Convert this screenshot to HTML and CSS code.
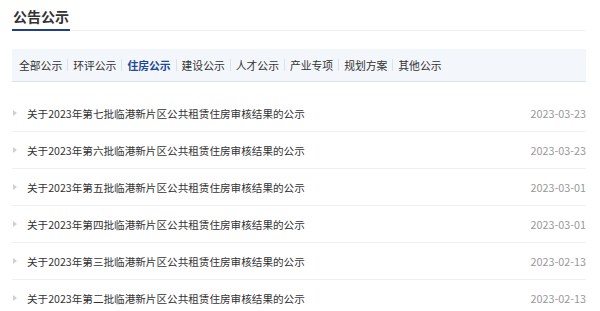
FILE: index.html
```html
<!DOCTYPE html>
<html lang="zh-CN">
<head>
    <meta charset="UTF-8">
    <meta name="viewport" content="width=device-width, initial-scale=1.0">
    <title>公告公示</title>
    <link rel="stylesheet" href="styles.css">
</head>
<body>
    <div class="notice">
        <div class="notice-head">
            <span class="notice-title">公告公示</span>
        </div>
        <ul class="tabs">
            <li class="tab">全部公示</li>
            <li class="tab">环评公示</li>
            <li class="tab active">住房公示</li>
            <li class="tab">建设公示</li>
            <li class="tab">人才公示</li>
            <li class="tab">产业专项</li>
            <li class="tab">规划方案</li>
            <li class="tab">其他公示</li>
        </ul>
        <ul class="list">
            <li class="item"><span class="item-title">关于2023年第七批临港新片区公共租赁住房审核结果的公示</span><span class="item-date">2023-03-23</span></li>
            <li class="item"><span class="item-title">关于2023年第六批临港新片区公共租赁住房审核结果的公示</span><span class="item-date">2023-03-23</span></li>
            <li class="item"><span class="item-title">关于2023年第五批临港新片区公共租赁住房审核结果的公示</span><span class="item-date">2023-03-01</span></li>
            <li class="item"><span class="item-title">关于2023年第四批临港新片区公共租赁住房审核结果的公示</span><span class="item-date">2023-03-01</span></li>
            <li class="item"><span class="item-title">关于2023年第三批临港新片区公共租赁住房审核结果的公示</span><span class="item-date">2023-02-13</span></li>
            <li class="item"><span class="item-title">关于2023年第二批临港新片区公共租赁住房审核结果的公示</span><span class="item-date">2023-02-13</span></li>
        </ul>
    </div>
</body>
</html>
```

FILE: styles.css
```css
body, html {
    margin: 0;
    padding: 0;
    width: 100%;
    height: 100%;
    overflow: hidden;
    background: #fff;
    font-family: "Noto Sans CJK SC", "Noto Sans", sans-serif;
    color: #333;
}
ul {
    list-style: none;
    margin: 0;
    padding: 0;
}
.notice {
    width: 574px;
    margin-left: 12px;
}
.notice-head {
    display: flex;
    padding-top: 6px;
    border-bottom: 1px solid #eef0f3;
}
.notice-title {
    font-size: 14px;
    font-weight: bold;
    line-height: 20px;
    padding: 0 1px 3px;
    border-bottom: 2px solid #1f3f8c;
    margin-bottom: -1px;
    color: #333;
}
.tabs {
    display: flex;
    align-items: center;
    margin-top: 18px;
    height: 32px;
    padding-left: 7px;
    background: #f3f7fb;
    border-bottom: 1px solid #d9e1ea;
}
.tab {
    font-size: 10.8px;
    line-height: 12px;
    padding: 0 5px;
    border-left: 1px solid #dde2e8;
    color: #333;
}
.tab:first-child {
    border-left: none;
    padding-left: 0;
}
.tab.active {
    color: #1f4796;
    font-weight: bold;
}
.list {
    margin-top: 13px;
}
.item {
    display: flex;
    align-items: center;
    justify-content: space-between;
    height: 36px;
    border-bottom: 1px solid #eef0f3;
    font-size: 10.6px;
}
.item:last-child {
    border-bottom: none;
}
.item-title {
    position: relative;
    padding-left: 15px;
    color: #333;
}
.item-title::before {
    content: "";
    position: absolute;
    left: 1px;
    top: 50%;
    margin-top: -3px;
    border-left: 4px solid #d0d0d0;
    border-top: 3px solid transparent;
    border-bottom: 3px solid transparent;
}
.item-date {
    color: #999;
    font-size: 10.8px;
}
```
